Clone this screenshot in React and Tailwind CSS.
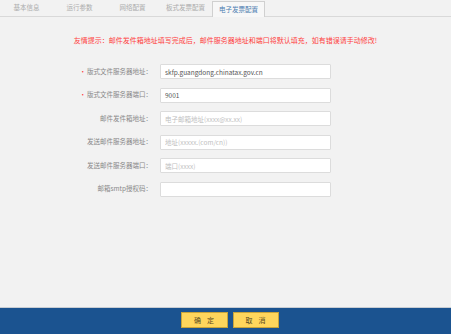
import { useState } from "react";

const tabs = ["基本信息", "运行参数", "网络配置", "板式发票配置", "电子发票配置"];

const fields = [
  { label: "版式文件服务器地址：", required: true, value: "skfp.guangdong.chinatax.gov.cn" },
  { label: "版式文件服务器端口：", required: true, value: "9001" },
  { label: "邮件发件箱地址：", placeholder: "电子邮箱地址(xxxx@xx.xx)" },
  { label: "发送邮件服务器地址：", placeholder: "地址(xxxxx.(com/cn))" },
  { label: "发送邮件服务器端口：", placeholder: "端口(xxxx)" },
  { label: "邮箱smtp授权码：", placeholder: "" },
];

export default function App() {
  const [active, setActive] = useState(4);

  return (
    <div
      className="flex h-[334px] w-[451px] flex-col overflow-hidden bg-[#f2f2f2] text-[6.5px] text-[#666]"
      style={{ fontFamily: '"Noto Sans CJK SC", "Noto Sans", sans-serif' }}
    >
      {/* tab strip */}
      <div className="flex h-[17px] shrink-0 items-end border-b border-[#d9d9d9]">
        {tabs.map((t, i) => (
          <button
            key={t}
            onClick={() => setActive(i)}
            className={
              i === active
                ? "-mb-px flex h-[16px] w-[53px] items-center justify-center border border-b-0 border-[#d0d0d0] bg-[#f7f7f7] text-[#4a7bb0]"
                : "flex h-[16px] w-[53px] items-center justify-center text-[#acacac]"
            }
          >
            {t}
          </button>
        ))}
      </div>

      <div className="flex-1">
        <p className="mt-[18px] text-center text-[7px] leading-[10px] text-[#ff4040]">
          友情提示：邮件发件箱地址填写完成后，邮件服务器地址和端口将默认填充，如有错误请手动修改!
        </p>

        <div className="mt-[19px] flex flex-col gap-[8.5px]">
          {fields.map((f) => (
            <div key={f.label} className="flex h-[15px] items-center">
              <label className="flex w-[152px] items-center justify-end text-[#888]">
                {f.required && <span className="mr-[1px] text-[#ff4040]">•</span>}
                {f.label}
              </label>
              <input
                defaultValue={f.value}
                placeholder={f.placeholder}
                className="ml-[8px] h-[15px] w-[171px] rounded-[1px] border border-[#dcdcdc] bg-white px-[4px] text-[6.5px] text-[#555] outline-none placeholder:text-[#c0c0c0]"
              />
            </div>
          ))}
        </div>
      </div>

      <div className="flex h-[27px] shrink-0 items-center justify-center gap-[5px] border-t border-[#c8cdd3] bg-[#1b5390] pb-[2px] pl-[9px]">
        <button className="h-[16px] w-[47px] border border-[#c9a43a] bg-[#ffd65c] text-[7px] tracking-[1px] text-[#5a4a20]">
          确&nbsp;&nbsp;定
        </button>
        <button className="h-[16px] w-[46px] border border-[#c9a43a] bg-[#ffd65c] text-[7px] tracking-[1px] text-[#5a4a20]">
          取&nbsp;&nbsp;消
        </button>
      </div>
    </div>
  );
}
